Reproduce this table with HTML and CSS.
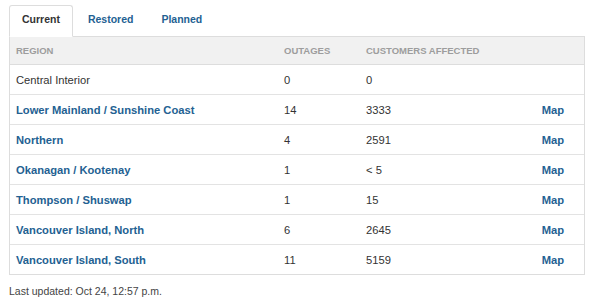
FILE: index.html
```html
<!DOCTYPE html>
<html>
<head>
<meta charset="utf-8">
<link rel="stylesheet" href="styles.css">
</head>
<body>
<div class="page">
  <ul class="tabs">
    <li class="tab active">Current</li>
    <li class="tab">Restored</li>
    <li class="tab">Planned</li>
  </ul>
  <div class="panel">
    <table class="outages">
      <colgroup>
        <col class="c-region"><col class="c-out"><col class="c-cust"><col class="c-map">
      </colgroup>
      <thead>
        <tr><th>Region</th><th>Outages</th><th>Customers affected</th><th></th></tr>
      </thead>
      <tbody>
        <tr><td>Central Interior</td><td>0</td><td>0</td><td></td></tr>
        <tr><td><a class="link">Lower Mainland / Sunshine Coast</a></td><td>14</td><td>3333</td><td class="map"><a class="link">Map</a></td></tr>
        <tr><td><a class="link">Northern</a></td><td>4</td><td>2591</td><td class="map"><a class="link">Map</a></td></tr>
        <tr><td><a class="link">Okanagan / Kootenay</a></td><td>1</td><td>&lt; 5</td><td class="map"><a class="link">Map</a></td></tr>
        <tr><td><a class="link">Thompson / Shuswap</a></td><td>1</td><td>15</td><td class="map"><a class="link">Map</a></td></tr>
        <tr><td><a class="link">Vancouver Island, North</a></td><td>6</td><td>2645</td><td class="map"><a class="link">Map</a></td></tr>
        <tr><td><a class="link">Vancouver Island, South</a></td><td>11</td><td>5159</td><td class="map"><a class="link">Map</a></td></tr>
      </tbody>
    </table>
  </div>
  <p class="updated">Last updated: Oct 24, 12:57 p.m.</p>
</div>
</body>
</html>
```

FILE: styles.css
```css
html, body {
  margin: 0;
  padding: 0;
  background: #fff;
}
body {
  font-family: "Liberation Sans", Arial, Helvetica, sans-serif;
  color: #333;
}
.page {
  padding: 5px 0 0 9px;
  width: 576px;
}
.tabs {
  list-style: none;
  margin: 0;
  padding: 0;
  display: flex;
  gap: 2px;
  position: relative;
  z-index: 2;
}
.tab {
  font-size: 10.5px;
  font-weight: bold;
  color: #236192;
  padding: 0 12px 4px;
  line-height: 26px;
  border: 1px solid transparent;
  border-radius: 3px 3px 0 0;
  margin-bottom: -1px;
}
.tab.active {
  color: #333;
  background: #fff;
  border-color: #ddd;
  border-bottom-color: #fff;
}
.panel {
  border: 1px solid #ddd;
}
.outages {
  width: 100%;
  table-layout: fixed;
  border-collapse: separate;
  border-spacing: 0;
}
.c-region { width: 268px; }
.c-out { width: 82px; }
.c-cust { width: 140px; }
.c-map { width: 84px; }
.outages th {
  background: #f1f1f1;
  color: #9d9d9d;
  font-size: 9.5px;
  font-weight: bold;
  text-transform: uppercase;
  text-align: left;
  height: 27px;
  padding: 0 6px;
  border-bottom: 1px solid #ddd;
  vertical-align: middle;
}
.outages td {
  font-size: 11.2px;
  color: #333;
  height: 29px;
  padding: 0 6px;
  border-bottom: 1px solid #e3e3e3;
  vertical-align: middle;
  white-space: nowrap;
}
.outages tbody tr:last-child td {
  border-bottom: none;
}
.outages td.map {
  text-align: right;
  padding-right: 20px;
}
.link {
  color: #236192;
  font-weight: bold;
  text-decoration: none;
}
.updated {
  margin: 10px 0 0;
  font-size: 10.5px;
  color: #444;
  line-height: 12px;
}
```
